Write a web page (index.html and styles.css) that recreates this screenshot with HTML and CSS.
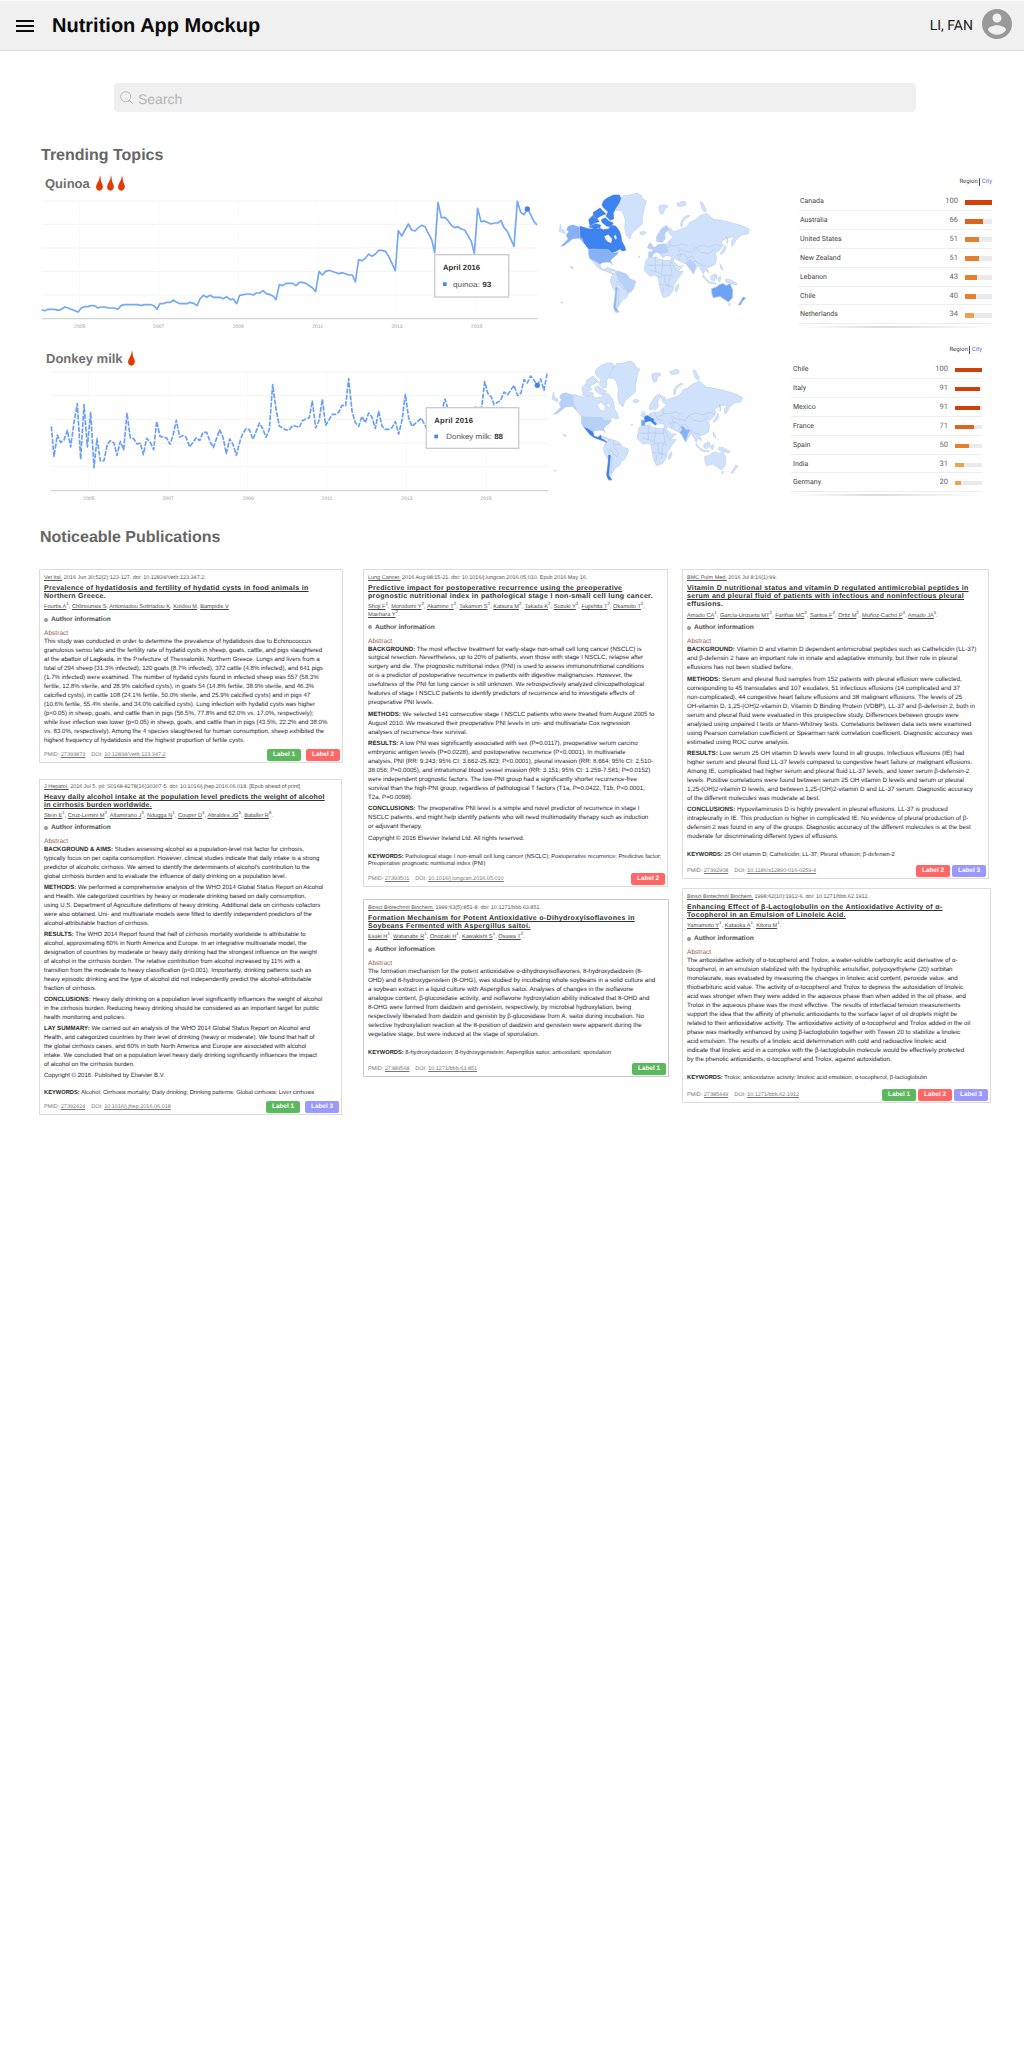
FILE: index.html
```html
<!DOCTYPE html>
<html lang="en">
<head>
<meta charset="utf-8">
<title>Nutrition App Mockup</title>
<link rel="stylesheet" href="styles.css">
</head>
<body>
<svg class="defs" width="0" height="0" aria-hidden="true">
  <symbol id="flame" viewBox="0 0 22 48"><path d="M12 0C17 9 13 17 19 26C25 36 20 48 11 48C1 48-2 38 2 29C5 22 12 15 12 0Z"/></symbol>
  <g id="land">
    <path d="M58 178l3-16 4 16 8 2 2 10-8-3-9-4zM228 110L240 90 250 76 270 74 290 68 303 74 308 86 320 92 313 110 311 125 307 140 308 160 285 180 275 190 270 206 258 195 254 172 256 150 249 128 240 120 228 120z"/>
    <path d="M300 186l10-4 9 5-8 7-10-2zM356 108l8-4 16 0 4 6-10 6-4 14-8 2-4-10zM410 98l10 0 6-6 12 4 0 8-10 4-14 0zM480 95l8 2 12 24-6 4-8-8zM447 134l-14 6-9 12-3 14 5 4 3-16 8-10 12-6z"/>
    <path d="M90 288l8 2 2 4-6 0zM205 293l14 4 14 6-4 2-20-6zM415 340l2 10-7 14-5-3 3-13zM63 396h5v2h-5zM295 258h4v3h-4z"/>
    <path d="M218 310L235 303 250 308 262 314 268 325 287 333 284 345 276 362 265 370 260 382 248 388 241 400 232 410 230 418 238 425 228 427 221 412 224 385 227 365 214 345 211 330z"/>
    <path d="M318 268L330 262 350 259 354 266 375 270 392 271 402 290 410 304 430 303 412 328 402 345 400 358 388 376 370 382 362 362 357 340 355 322 346 315 330 318 312 300z"/>
    <path d="M325 262L325 246 336 244 338 232 348 230 352 224 362 222 378 221 390 210 400 200 388 190 385 178 380 166 365 175 350 200 348 212 356 216 360 210 366 216 376 206 374 190 384 172 395 176 400 184 420 178 440 170 450 155 462 150 480 136 500 128 520 146 545 150 570 156 600 164 628 176 625 190 605 194 590 206 584 218 576 228 574 212 584 200 564 202 545 212 548 226 538 240 526 248 530 264 526 282 510 290 500 292 507 308 495 300 490 312 482 298 475 285 466 298 460 312 448 292 438 280 428 278 418 272 410 268 404 262 400 272 416 288 430 286 414 302 408 300 392 270 395 258 378 256 368 262 358 248 350 244 338 252 334 262z"/>
    <path d="M323 232l6-14 6 4 4 12-8 2zM555 224l3 12-8 12-10 4 8-14zM565 210l-6-12 2 22zM489 314l12 14 10 8-6 2-16-18zM512 318l14-8 4 10-8 12-9-4zM510 336l18 2 0 3-18-2zM534 322l8-4-2 16-5-2zM540 280l5 8 4 12-7-6zM558 326l14 2 20 12-4 4-16-4-16-6z"/>
    <path d="M515 355L530 350 540 342 550 340 558 346 570 340 578 360 577 382 565 395 552 386 540 378 520 382 516 370zM565 400l6 0-3 6zM608 380l8 4-8 8-8 12-6-1 8-12z"/>
    <path class="border" d="M240 325l16 18-4 14-12-14-12-10M227 340l10 20-2 50M242 306l0 14 18-2M322 285h24v20M346 262v22h22v-14M368 285h24v-14M355 322l15-8h18l14 6M330 300l25 6 12 8M368 285l-5 24M392 285l4 25-8 12M375 315v24l14 8M358 342l30 6-4 12M370 350v14l-6 6M389 320l-3 24 14 8M390 225l18 2 18-6 18 6M390 210l0 20-18 4M366 222l6 20 16 4M352 225l0 20M415 232l16 10 26 4 10-14 22-8 20 6 20-8 16 6M409 255l20-4 14 12 14-6M415 235l8 20-8 14M443 263l-6 14M457 257l12 18M467 232l16 14 24 4 20-16M465 272l20 12 14 4M450 280l18-8M530 312v16"/>
  </g>
  <path id="canada" fill-rule="evenodd" d="M120 168L135 172 150 176 175 172 190 178 206 176 214 164 228 168 238 182 243 196 245 212 254 228 257 240 246 242 240 236 228 243 215 248 205 238 146 236 132 218 120 203zM192 198L205 192 217 206 214 219 203 215 196 207zM226 192L232 204 226 208 221 199zM190 92L200 84 220 74 238 74 243 83 238 96 228 112 220 128 221 146 211 150 198 138 204 124 192 114 186 104zM160 126l20-13 8 8 10 10-16 6-12 8-10-4zM146 148l12-12 12 8 8 10-14 4-14 8zM146 170l20-10 16 4-4 12zM184 148l12-6 10 10 14 6-8 12-14-4-12-10z"/>
  <path id="usa" d="M119 170L98 163 84 168 80 178 86 184 78 194 84 206 66 224 62 228 72 226 98 206 119 204 130 216 128 206 120 200zM146 236L205 238 215 248 236 244 230 254 220 262 212 270 217 284 210 276 196 276 186 278 180 282 165 272 150 266 145 252z"/>
  <path id="mexico" d="M154 268L165 272 180 282 183 294 195 297 203 290 206 302 214 304 222 312 205 306 184 298 172 290z"/>
  <path id="chile" d="M227 350L232 352 229 385 227 410 236 424 226 423 221 410 225 380z"/>
  <path id="australia" d="M515 355L530 350 540 342 550 340 558 346 570 340 578 360 577 382 565 395 552 386 540 378 520 382 516 370zM609 380l8 3-9 9-7 13-5-2 8-12z"/>
</svg>

<header class="topbar">
  <svg class="menu" viewBox="0 0 18 14"><path d="M0 2h18M0 7h18M0 12h18"/></svg>
  <h1>Nutrition App Mockup</h1>
  <span class="user">LI, FAN</span>
  <svg class="avatar" viewBox="2 2 20 20"><path d="M12 2C6.48 2 2 6.48 2 12s4.48 10 10 10 10-4.480 10-10S17.520 2 12 2zm0 3c1.660 0 3 1.340 3 3s-1.340 3-3 3-3-1.340-3-3 1.340-3 3-3zm0 14.200c-2.500 0-4.710-1.280-6-3.220.030-1.990 4-3.080 6-3.080 1.990 0 5.970 1.090 6 3.080-1.290 1.940-3.500 3.220-6 3.220z"/></svg>
</header>

<main>
  <div class="search">
    <svg viewBox="0 0 14 14"><circle cx="5.700" cy="5.700" r="5"/><path d="M9.300 9.300l3.600 3.600"/></svg>
    <span>Search</span>
  </div>

  <h2>Trending Topics</h2>

  <section class="topic first">
    <div class="trend">
      <h3>Quinoa <span class="flames"><svg><use href="#flame"/></svg><svg><use href="#flame"/></svg><svg><use href="#flame"/></svg></span></h3>
      <svg class="chart" viewBox="0 75 1560 420">
        <path class="grid" d="M35 93H1523M35 163H1523M35 234H1523M35 304H1523M35 375H1523"/>
        <path class="grid faint" d="M149 93V445M387 93V445M625 93V445M863 93V445M1101 93V445M1340 93V445"/>
        <path class="axis" d="M35 446H1523"/>
        <polyline class="line" points="35,419 44,422 54,418 74,418 84,421 94,418 104,411 114,414 144,426 154,414 163,410 173,410 183,407 193,407 203,414 213,411 225,411 233,414 253,414 263,418 273,407 283,404 323,404 333,407 343,404 363,404 372,407 381,418 390,401 400,401 410,397 421,397 430,390 440,397 450,401 471,401 480,397 491,400 501,407 510,387 520,376 530,382 540,376 550,382 570,382 580,386 590,380 600,389 610,387 620,401 629,376 650,372 660,372 670,375 679,369 689,369 699,362 709,371 720,374 730,379 738,389 748,344 758,347 768,340 788,340 798,347 808,337 818,337 828,340 848,354 857,365 867,304 877,315 887,304 897,301 927,311 937,308 957,315 967,315 976,336 986,269 996,272 1006,265 1016,252 1026,259 1036,252 1046,241 1056,241 1066,244 1076,259 1096,302 1105,182 1115,198 1135,162 1145,180 1155,183 1165,173 1175,166 1185,170 1195,190 1205,209 1214,248 1224,97 1234,143 1244,142 1254,152 1264,166 1274,173 1284,170 1294,177 1304,180 1324,214 1333,251 1343,115 1353,155 1363,153 1383,162 1393,159 1403,159 1413,152 1422,173 1432,184 1452,229 1462,94 1472,127 1482,134 1492,116 1502,134 1511,153 1521,165"/>
        <circle class="dot" cx="1492" cy="117" r="8"/>
        <g class="years"><text x="149" y="473">2005</text><text x="386" y="473">2007</text><text x="625" y="473">2009</text><text x="863" y="473">2011</text><text x="1101" y="473">2013</text><text x="1340" y="473">2015</text></g>
        <rect class="tip" x="1214" y="254" width="222" height="127"/>
        <text class="tip-title" x="1239" y="300" textLength="111">April 2016</text>
        <rect class="key" x="1239" y="337" width="11" height="11"/>
        <text class="tip-text" x="1269" y="351" textLength="115" lengthAdjust="spacingAndGlyphs">quinoa: <tspan>93</tspan></text>
      </svg>
    </div>
    <svg class="map" viewBox="30 50 630 400">
      <use href="#land"/><use class="s3" href="#chile"/><use href="#mexico"/><use class="s5" href="#canada"/><use class="s3" href="#usa"/><use class="s4" href="#australia"/>
      <path class="s2" d="M338 232l10-2 4-6 10-2 16 0 6 22-20 6-14-4-10 4-4 10-8 0 0-14 12-2z"/>
      <path class="s2" d="M350 200L365 175 380 166 385 178 372 192 374 206 366 216 356 214zM323 232l6-14 6 4 4 12-8 2zM438 280l12-14 8 10 10 8-8 24z"/>
      <path class="s2" d="M235 303l27 10 6 12 19 8-8 24-16 10-12-20-14-14-8-22z"/>
    </svg>
    <div class="regions">
      <div class="tabs"><span>Region</span><i></i><b>City</b></div>
      <div class="row"><span>Canada</span><em>100</em><u><i class="r1" style="width:100%"></i></u></div>
      <div class="row"><span>Australia</span><em>66</em><u><i class="r2" style="width:67%"></i></u></div>
      <div class="row"><span>United States</span><em>51</em><u><i class="r3" style="width:52%"></i></u></div>
      <div class="row"><span>New Zealand</span><em>51</em><u><i class="r3" style="width:52%"></i></u></div>
      <div class="row"><span>Lebanon</span><em>43</em><u><i class="r3" style="width:43%"></i></u></div>
      <div class="row"><span>Chile</span><em>40</em><u><i class="r3" style="width:40%"></i></u></div>
      <div class="row"><span>Netherlands</span><em>34</em><u><i class="r4" style="width:34%"></i></u></div>
      <div class="fade"></div>
    </div>
  </section>

  <section class="topic second">
    <div class="trend">
      <h3>Donkey milk <span class="flames"><svg><use href="#flame"/></svg></span></h3>
      <svg class="chart" viewBox="0 80 1560 420">
        <path class="grid" d="M62 95H1554M62 166H1554M62 237H1554M62 308H1554M62 379H1554"/>
        <path class="grid faint" d="M176 95V450M414 95V450M653 95V450M891 95V450M1130 95V450M1370 95V450"/>
        <path class="axis" d="M62 451H1554"/>
        <polyline class="line dashed" points="64,258 72,348 82,284 92,306 102,299 112,270 122,320 132,246 142,190 152,355 162,193 172,320 182,216 192,382 201,295 211,362 222,361 232,312 241,301 252,308 261,345 271,303 281,328 291,219 301,293 311,295 321,311 331,309 340,343 350,294 361,306 371,328 380,243 390,288 410,293 420,312 429,285 439,240 449,290 458,286 468,290 479,320 499,292 509,301 519,276 530,276 540,303 550,322 569,268 579,291 589,340 599,296 609,312 619,345 629,306 638,280 648,265 658,268 669,297 688,248 698,265 708,291 718,267 728,133 738,205 748,257 768,269 778,269 788,255 808,261 817,241 838,232 847,182 857,263 867,241 877,177 887,255 907,222 917,222 926,216 936,195 947,196 956,115 966,212 976,247 986,258 996,228 1006,247 1016,218 1026,231 1036,264 1046,213 1056,257 1066,267 1076,267 1086,262 1096,244 1106,281 1116,240 1126,162 1136,233 1146,258 1174,234 1190,264 1235,215 1245,176 1255,210 1325,210 1335,201 1355,202 1364,124 1374,160 1384,170 1392,193 1412,180 1422,155 1433,163 1452,135 1463,166 1473,158 1482,118 1492,128 1502,107 1512,120 1522,134 1532,116 1542,150 1552,95"/>
        <circle class="dot" cx="1522" cy="135" r="8"/>
        <g class="years"><text x="176" y="479">2005</text><text x="414" y="479">2007</text><text x="655" y="479">2009</text><text x="891" y="479">2011</text><text x="1130" y="479">2013</text><text x="1368" y="479">2015</text></g>
        <rect class="tip" x="1189" y="202" width="277" height="122"/>
        <text class="tip-title" x="1213" y="247" textLength="116">April 2016</text>
        <rect class="key" x="1213" y="283" width="11" height="11"/>
        <text class="tip-text" x="1249" y="297" textLength="170" lengthAdjust="spacingAndGlyphs">Donkey milk: <tspan>88</tspan></text>
      </svg>
    </div>
    <svg class="map" viewBox="30 50 630 400">
      <use href="#land"/><use href="#canada"/><use class="s2" href="#usa"/><use class="s5" href="#mexico"/><use class="s5" href="#chile"/>
      <path class="s4" d="M325 262L325 246 336 246 334 238 342 232 352 238 348 246 338 250 334 262z"/>
      <path class="s5" d="M334 236l10-4 8 6 10 4 0 6 8 8-4 4-14-12-14 2z"/>
      <path class="s3" d="M443 264l10 2 6 8 14 2-8 10-8 24-10-20-8-8 8-6z"/>
    </svg>
    <div class="regions">
      <div class="tabs"><span>Region</span><i></i><b>City</b></div>
      <div class="row"><span>Chile</span><em>100</em><u><i class="r1" style="width:100%"></i></u></div>
      <div class="row"><span>Italy</span><em>91</em><u><i class="r1" style="width:92%"></i></u></div>
      <div class="row"><span>Mexico</span><em>91</em><u><i class="r1" style="width:92%"></i></u></div>
      <div class="row"><span>France</span><em>71</em><u><i class="r2" style="width:71%"></i></u></div>
      <div class="row"><span>Spain</span><em>50</em><u><i class="r3" style="width:51%"></i></u></div>
      <div class="row"><span>India</span><em>31</em><u><i class="r4" style="width:32%"></i></u></div>
      <div class="row"><span>Germany</span><em>20</em><u><i class="r4" style="width:21%"></i></u></div>
      <div class="fade"></div>
    </div>
  </section>

  <h2 class="pubs-title">Noticeable Publications</h2>

  <section class="pubs">
    <div class="col">
      <article class="card c1">
        <div class="cite"><a>Vet Ital.</a> 2016 Jun 30;52(2):123-127. doi: 10.12834/VetIt.123.347.2.</div>
        <h4><a>Prevalence of hydatidosis and fertility of hydatid cysts in food animals in</a><br>Northern Greece.</h4>
        <div class="authors"><a>Fourtis A</a><sup>1</sup>, <a>Chlinounsis S</a>, <a>Antoniadou Sotiriadou K</a>, <a>Koidou M</a>, <a>Bampidis V</a></div>
        <div class="info"><i></i>Author information</div>
        <h5>Abstract</h5>
        <p>This study was conducted in order to determine the prevalence of hydatidosis due to Echinococcus<br>granulosus sensu lato and the fertility rate of hydatid cysts in sheep, goats, cattle, and pigs slaughtered<br>at the abattoir of Lagkada, in the Prefecture of Thessaloniki, Northern Greece. Lungs and livers from a<br>total of 294 sheep (31.3% infected), 120 goats (8.7% infected), 372 cattle (4.8% infected), and 641 pigs<br>(1.7% infected) were examined. The number of hydatid cysts found in infected sheep was 557 (58.3%<br>fertile, 12.8% sterile, and 28.9% calcified cysts), in goats 54 (14.8% fertile, 38.9% sterile, and 46.3%<br>calcified cysts), in cattle 108 (24.1% fertile, 50.0% sterile, and 25.9% calcified cysts) and in pigs 47<br>(10.6% fertile, 55.4% sterile, and 34.0% calcified cysts). Lung infection with hydatid cysts was higher<br>(p&lt;0.05) in sheep, goats, and cattle than in pigs (56.5%, 77.8% and 62.0% vs. 17.0%, respectively);<br>while liver infection was lower (p&lt;0.05) in sheep, goats, and cattle than in pigs (43.5%, 22.2% and 38.0%<br>vs. 83.0%, respectively). Among the 4 species slaughtered for human consumption, sheep exhibited the<br>highest frequency of hydatidosis and the highest proportion of fertile cysts.</p>
        <footer><span>PMID: <a>27393873</a></span><span>DOI: <a>10.12834/VetIt.123.347.2</a></span><b class="l1">Label 1</b><b class="l2">Label 2</b></footer>
      </article>
      <article class="card c2">
        <div class="cite"><a>J Hepatol.</a> 2016 Jul 5. pii: S0168-8278(16)30307-5. doi: 10.1016/j.jhep.2016.06.018. [Epub ahead of print]</div>
        <h4><a>Heavy daily alcohol intake at the population level predicts the weight of alcohol</a><br><a>in cirrhosis burden worldwide.</a></h4>
        <div class="authors"><a>Stein E</a><sup>1</sup>, <a>Cruz-Lemini M</a><sup>2</sup>, <a>Altamirano J</a><sup>3</sup>, <a>Ndugga N</a><sup>1</sup>, <a>Couper D</a><sup>4</sup>, <a>Abraldes JG</a><sup>5</sup>, <a>Bataller R</a><sup>6</sup>.</div>
        <div class="info"><i></i>Author information</div>
        <h5>Abstract</h5>
        <p><strong>BACKGROUND &amp; AIMS:</strong> Studies assessing alcohol as a population-level risk factor for cirrhosis,<br>typically focus on per capita consumption. However, clinical studies indicate that daily intake is a strong<br>predictor of alcoholic cirrhosis. We aimed to identify the determinants of alcohol's contribution to the<br>global cirrhosis burden and to evaluate the influence of daily drinking on a population level.</p>
        <p><strong>METHODS:</strong> We performed a comprehensive analysis of the WHO 2014 Global Status Report on Alcohol<br>and Health. We categorized countries by heavy or moderate drinking based on daily consumption,<br>using U.S. Department of Agriculture definitions of heavy drinking. Additional data on cirrhosis cofactors<br>were also obtained. Uni- and multivariate models were fitted to identify independent predictors of the<br>alcohol-attributable fraction of cirrhosis.</p>
        <p><strong>RESULTS:</strong> The WHO 2014 Report found that half of cirrhosis mortality worldwide is attributable to<br>alcohol, approximating 60% in North America and Europe. In an integrative multivariate model, the<br>designation of countries by moderate or heavy daily drinking had the strongest influence on the weight<br>of alcohol in the cirrhosis burden. The relative contribution from alcohol increased by 11% with a<br>transition from the moderate to heavy classification (p&lt;0.001). Importantly, drinking patterns such as<br>heavy episodic drinking and the type of alcohol did not independently predict the alcohol-attributable<br>fraction of cirrhosis.</p>
        <p><strong>CONCLUSIONS:</strong> Heavy daily drinking on a population level significantly influences the weight of alcohol<br>in the cirrhosis burden. Reducing heavy drinking should be considered as an important target for public<br>health monitoring and policies.</p>
        <p><strong>LAY SUMMARY:</strong> We carried out an analysis of the WHO 2014 Global Status Report on Alcohol and<br>Health, and categorized countries by their level of drinking (heavy or moderate). We found that half of<br>the global cirrhosis cases, and 60% in both North America and Europe are associated with alcohol<br>intake. We concluded that on a population level heavy daily drinking significantly influences the impact<br>of alcohol on the cirrhosis burden.</p>
        <p>Copyright © 2016. Published by Elsevier B.V.</p>
        <p class="kw"><strong>KEYWORDS:</strong> Alcohol; Cirrhosis mortality; Daily drinking; Drinking patterns; Global cirrhosis; Liver cirrhosis</p>
        <footer><span>PMID: <a>27392424</a></span><span>DOI: <a>10.1016/j.jhep.2016.06.018</a></span><b class="l1">Label 1</b><b class="l3">Label 3</b></footer>
      </article>
    </div>

    <div class="col">
      <article class="card c3">
        <div class="cite"><a>Lung Cancer.</a> 2016 Aug;98:15-21. doi: 10.1016/j.lungcan.2016.05.010. Epub 2016 May 16.</div>
        <h4><a>Predictive impact for postoperative recurrence using the preoperative</a><br>prognostic nutritional index in pathological stage I non-small cell lung cancer.</h4>
        <div class="authors"><a>Shoji F</a><sup>1</sup>, <a>Morodomi Y</a><sup>2</sup>, <a>Akamine T</a><sup>2</sup>, <a>Takamori S</a><sup>2</sup>, <a>Katsura M</a><sup>2</sup>, <a>Takada K</a><sup>2</sup>, <a>Suzuki Y</a><sup>2</sup>, <a>Fujishita T</a><sup>2</sup>, <a>Okamoto T</a><sup>2</sup>,<br><a>Maehara Y</a><sup>2</sup>.</div>
        <div class="info"><i></i>Author information</div>
        <h5>Abstract</h5>
        <p><strong>BACKGROUND:</strong> The most effective treatment for early-stage non-small cell lung cancer (NSCLC) is<br>surgical resection. Nevertheless, up to 20% of patients, even those with stage I NSCLC, relapse after<br>surgery and die. The prognostic nutritional index (PNI) is used to assess immunonutritional conditions<br>or is a predictor of postoperative recurrence in patients with digestive malignancies. However, the<br>usefulness of the PNI for lung cancer is still unknown. We retrospectively analyzed clinicopathological<br>features of stage I NSCLC patients to identify predictors of recurrence and to investigate effects of<br>preoperative PNI levels.</p>
        <p><strong>METHODS:</strong> We selected 141 consecutive stage I NSCLC patients who were treated from August 2005 to<br>August 2010. We measured their preoperative PNI levels in uni- and multivariate Cox regression<br>analyses of recurrence-free survival.</p>
        <p><strong>RESULTS:</strong> A low PNI was significantly associated with sex (P=0.0117), preoperative serum carcino<br>embryonic antigen levels (P=0.0228), and postoperative recurrence (P&lt;0.0001). In multivariate<br>analysis, PNI (RR: 9.243; 95% CI: 3.662-25.823; P&lt;0.0001), pleural invasion (RR: 8.664; 95% CI: 2.510-<br>38.056; P=0.0005), and intratumoral blood vessel invasion (RR: 3.151; 95% CI: 1.259-7.581; P=0.0152)<br>were independent prognostic factors. The low-PNI group had a significantly shorter recurrence-free<br>survival than the high-PNI group, regardless of pathological T factors (T1a, P=0.0422, T1b, P&lt;0.0001,<br>T2a, P=0.0098).</p>
        <p><strong>CONCLUSIONS:</strong> The preoperative PNI level is a simple and novel predictor of recurrence in stage I<br>NSCLC patients, and might help identify patients who will need multimodality therapy such as induction<br>or adjuvant therapy.</p>
        <p>Copyright © 2016 Elsevier Ireland Ltd. All rights reserved.</p>
        <p class="kw"><strong>KEYWORDS:</strong> Pathological stage I non-small cell lung cancer (NSCLC); Postoperative recurrence; Predictive factor;<br>Preoperative prognostic nutritional index (PNI)</p>
        <footer><span>PMID: <a>27393501</a></span><span>DOI: <a>10.1016/j.lungcan.2016.05.010</a></span><b class="l2">Label 2</b></footer>
      </article>
      <article class="card c4">
        <div class="cite"><a>Biosci Biotechnol Biochem.</a> 1999;63(5):851-8. doi: 10.1271/bbb.63.851.</div>
        <h4><a>Formation Mechanism for Potent Antioxidative o-Dihydroxyisoflavones in</a><br><a>Soybeans Fermented with Aspergillus saitoi.</a></h4>
        <div class="authors"><a>Esaki H</a><sup>1</sup>, <a>Watanabe R</a><sup>1</sup>, <a>Onozaki H</a><sup>1</sup>, <a>Kawakishi S</a><sup>1</sup>, <a>Osawa T</a><sup>2</sup>.</div>
        <div class="info"><i></i>Author information</div>
        <h5>Abstract</h5>
        <p>The formation mechanism for the potent antioxidative o-dihydroxyisoflavones, 8-hydroxydaidzein (8-<br>OHD) and 8-hydroxygenistein (8-OHG), was studied by incubating whole soybeans in a solid culture and<br>a soybean extract in a liquid culture with Aspergillus saitoi. Analyses of changes in the isoflavone<br>analogue content, β-glucosidase activity, and isoflavone hydroxylation ability indicated that 8-OHD and<br>8-OHG were formed from daidzein and genistein, respectively, by microbial hydroxylation, being<br>respectively liberated from daidzin and genistin by β-glucosidase from A. saitoi during incubation. No<br>selective hydroxylation reaction at the 8-position of daidzein and genistein were apparent during the<br>vegetative stage, but were induced at the stage of sporulation.</p>
        <p class="kw"><strong>KEYWORDS:</strong> 8-hydroxydaidzein; 8-hydroxygenistein; Aspergillus saitoi; antioxidant; sporulation</p>
        <footer><span>PMID: <a>27389568</a></span><span>DOI: <a>10.1271/bbb.63.851</a></span><b class="l1">Label 1</b></footer>
      </article>
    </div>

    <div class="col">
      <article class="card c5">
        <div class="cite"><a>BMC Pulm Med.</a> 2016 Jul 8;16(1):99.</div>
        <h4><a>Vitamin D nutritional status and vitamin D regulated antimicrobial peptides in</a><br><a>serum and pleural fluid of patients with infectious and noninfectious pleural</a><br>effusions.</h4>
        <div class="authors"><a>Amado CA</a><sup>1</sup>, <a>García-Unzueta MT</a><sup>2</sup>, <a>Fariñas MC</a><sup>3</sup>, <a>Santos F</a><sup>2</sup>, <a>Ortiz M</a><sup>2</sup>, <a>Muñoz-Cacho P</a><sup>4</sup>, <a>Amado JA</a><sup>5</sup>.</div>
        <div class="info"><i></i>Author information</div>
        <h5>Abstract</h5>
        <p><strong>BACKGROUND:</strong> Vitamin D and vitamin D dependent antimicrobial peptides such as Cathelicidin (LL-37)<br>and β-defensin 2 have an important role in innate and adaptative immunity, but their role in pleural<br>effusions has not been studied before.</p>
        <p><strong>METHODS:</strong> Serum and pleural fluid samples from 152 patients with pleural effusion were collected,<br>corresponding to 45 transudates and 107 exudates, 51 infectious effusions (14 complicated and 37<br>non-complicated), 44 congestive heart failure effusions and 38 malignant effusions. The levels of 25<br>OH-vitamin D, 1,25-(OH)2-vitamin D, Vitamin D Binding Protein (VDBP), LL-37 and β-defensin 2, both in<br>serum and pleural fluid were evaluated in this prospective study. Differences between groups were<br>analysed using unpaired t tests or Mann-Whitney tests. Correlations between data sets were examined<br>using Pearson correlation coefficient or Spearman rank correlation coefficient. Diagnostic accuracy was<br>estimated using ROC curve analysis.</p>
        <p><strong>RESULTS:</strong> Low serum 25 OH vitamin D levels were found in all groups. Infectious effusions (IE) had<br>higher serum and pleural fluid LL-37 levels compared to congestive heart failure or malignant effusions.<br>Among IE, complicated had higher serum and pleural fluid LL-37 levels, and lower serum β-defensin-2<br>levels. Positive correlations were found between serum 25 OH vitamin D levels and serum or pleural<br>1,25-(OH)2-vitamin D levels, and between 1,25-(OH)2-vitamin D and LL-37 serum. Diagnostic accuracy<br>of the different molecules was moderate at best.</p>
        <p><strong>CONCLUSIONS:</strong> Hypovitaminosis D is highly prevalent in pleural effusions. LL-37 is produced<br>intrapleurally in IE. This production is higher in complicated IE. No evidence of pleural production of β-<br>defensin 2 was found in any of the groups. Diagnostic accuracy of the different molecules is at the best<br>moderate for discriminating different types of effusions.</p>
        <p class="kw"><strong>KEYWORDS:</strong> 25 OH vitamin D; Cathelicidin; LL-37; Pleural effusion; β-defensin-2</p>
        <footer><span>PMID: <a>27392908</a></span><span>DOI: <a>10.1186/s12890-016-0259-4</a></span><b class="l2">Label 2</b><b class="l3">Label 3</b></footer>
      </article>
      <article class="card c6">
        <div class="cite"><a>Biosci Biotechnol Biochem.</a> 1998;62(10):1912-6. doi: 10.1271/bbb.62.1912.</div>
        <h4><a>Enhancing Effect of β-Lactoglobulin on the Antioxidative Activity of α-</a><br><a>Tocopherol in an Emulsion of Linoleic Acid.</a></h4>
        <div class="authors"><a>Yamamoto Y</a><sup>1</sup>, <a>Kataoka A</a><sup>1</sup>, <a>Kitora M</a><sup>1</sup>.</div>
        <div class="info"><i></i>Author information</div>
        <h5>Abstract</h5>
        <p>The antioxidative activity of α-tocopherol and Trolox, a water-soluble carboxylic acid derivative of α-<br>tocopherol, in an emulsion stabilized with the hydrophilic emulsifier, polyoxyethylene (20) sorbitan<br>monolaurate, was evaluated by measuring the changes in linoleic acid content, peroxide value, and<br>thiobarbituric acid value. The activity of α-tocopherol and Trolox to depress the autoxidation of linoleic<br>acid was stronger when they were added in the aqueous phase than when added in the oil phase, and<br>Trolox in the aqueous phase was the most effective. The results of interfacial tension measurements<br>support the idea that the affinity of phenolic antioxidants to the surface layer of oil droplets might be<br>related to their antioxidative activity. The antioxidative activity of α-tocopherol and Trolox added in the oil<br>phase was markedly enhanced by using β-lactoglobulin together with Tween 20 to stabilize a linoleic<br>acid emulsion. The results of a linoleic acid determination with cold and radioactive linoleic acid<br>indicate that linoleic acid in a complex with the β-lactoglobulin molecule would be effectively protected<br>by the phenolic antioxidants, α-tocopherol and Trolox, against autoxidation.</p>
        <p class="kw"><strong>KEYWORDS:</strong> Trolox; antioxidative activity; linoleic acid emulsion; α-tocopherol; β-lactoglobulin</p>
        <footer><span>PMID: <a>27385449</a></span><span>DOI: <a>10.1271/bbb.62.1912</a></span><b class="l1">Label 1</b><b class="l2">Label 2</b><b class="l3">Label 3</b></footer>
      </article>
    </div>
  </section>
</main>
</body>
</html>
```
FILE: styles.css
```css
* { box-sizing: border-box; }
body { margin: 0; background: #fff; font-family: "Liberation Sans", Arial, sans-serif; color: #222; min-height: 2048px; text-rendering: geometricPrecision; }
h1, h2, h3, h4, h5, p { margin: 0; }
.defs { position: absolute; }

.topbar { display: flex; align-items: center; height: 51px; padding: 0 12px 0 16px; background: #f0f0f0; border-top: 1px solid #f8f8f8; border-bottom: 1px solid #d9d9d9; }
.menu { width: 18px; height: 14px; }
.menu path { stroke: #0c0c0c; stroke-width: 2; fill: none; }
.topbar h1 { margin-left: 18px; font-size: 20px; line-height: 24px; color: #0a0a0a; }
.user { margin-left: auto; font: 14px/20px Roboto, sans-serif; color: #222; }
.avatar { width: 30px; height: 30px; margin: -3px 0 0 9px; fill: #999; }

.search { display: flex; align-items: center; width: 802px; height: 29px; margin: 32px 0 0 114px; padding-left: 6px; background: #f0f0f0; border-radius: 4px; color: #b5b5b5; font-size: 14px; }
.search svg { width: 14px; height: 14px; margin-right: 4px; fill: none; stroke: #b9b9b9; stroke-width: 1; }
.search span { padding-top: 2px; }

h2 { margin: 34px 0 0 41px; font-size: 16px; line-height: 20px; color: #666; }

.topic { display: grid; grid-template-columns: 520px 249px 1fr; margin-left: 30px; height: 170px; }
.topic.first { margin-top: 4px; }
.trend h3 { display: flex; gap: 6px; height: 25px; padding: 5px 0 0 15px; font-size: 13px; line-height: 17px; color: #707070; }
.second .trend h3 { gap: 5px; padding: 10px 0 0 16px; height: 26.600px; }
.flames { display: flex; gap: 4px; }
.flames svg { width: 7px; height: 16px; fill: #e03c00; }
.chart { display: block; width: 520px; height: 140px; }
.grid { stroke: #f3f3f3; stroke-width: 3; fill: none; }
.faint { stroke: #fafafa; }
.axis { stroke: #d4d4d4; stroke-width: 4; }
.line { fill: none; stroke: #74a7f8; stroke-width: 5; stroke-linejoin: round; }
.dashed { stroke-dasharray: 15 4; stroke: #6a9ff5; }
.dot { fill: #4583ea; }
.years { font-size: 15px; fill: #999; text-anchor: middle; }
.tip { fill: #fff; stroke: #ccc; stroke-width: 4; }
.tip-title { font-size: 23px; font-weight: bold; fill: #333; }
.tip-text { font-size: 23px; fill: #555; }
.tip-text tspan { font-weight: bold; fill: #333; }
.key { fill: #4285f4; }

.map { display: block; width: 210px; height: 133.330px; margin-top: 16.670px; fill: #d0e1fb; stroke: #b6c8e4; stroke-width: 1.500; stroke-linejoin: round; }
.second .map { margin: 14.700px 0 0 -7.300px; }
.border { fill: none; stroke-width: 2; }
.s2 { fill: #b7d0f8; }
.s3 { fill: #86b1f6; }
.s4 { fill: #6ea2f5; }
.s5 { fill: #3d83ef; stroke: #3878dc; }

.regions { width: 193px; padding-top: 8px; font: 7px/8px Roboto, sans-serif; color: #444; }
.second .regions { width: 191px; margin-left: -8px; padding-top: 6px; }
.tabs { display: flex; justify-content: flex-end; align-items: center; height: 8px; margin-bottom: 6.300px; font-size: 6px; }
.tabs i { width: 1px; height: 8px; margin: 0 1.500px; background: #555; }
.tabs b { font-weight: 400; color: #5b6fd0; }
.row { display: grid; grid-template-columns: 1fr 30px 27px; column-gap: 7px; align-items: center; height: 18.870px; padding-left: 1px; border-bottom: 1px solid #eeeef1; }
.second .row { padding-left: 2px; }
.row em { font-style: normal; text-align: right; font-size: 7.500px; color: #666; }
.row u { display: block; height: 5px; margin-top: 2px; background: #eaeaea; }
.second .row u { height: 4px; }
.row u i { display: block; height: 100%; }
.r1 { background: #cf410b; }
.r2 { background: #dc6420; }
.r3 { background: #e68031; }
.r4 { background: #f0a04c; }
.fade { height: 2px; margin-top: 2px; background: linear-gradient(90deg, #fff, #dcdcdc 45%, #fff); }

.pubs-title { margin: 17.500px 0 0 40px; }

.pubs { display: flex; padding: 21.500px 0 0 39px; }
.col { display: flex; flex-direction: column; }
.col:nth-child(1) { width: 324px; gap: 16px; }
.col:nth-child(2) { width: 319px; gap: 12px; }
.col:nth-child(3) { width: 309px; gap: 9px; }
.card { display: flex; flex-direction: column; padding: 4px 2px 1px 4px; border: 1px solid #dcdcdc; font-size: 6.120px; color: #2b2338; white-space: nowrap; }
.card a { text-decoration: underline; text-decoration-thickness: .5px; }
.c1 { width: 304px; height: 194px; }
.c2 { width: 303px; height: 336px; padding-top: 3px; font-size: 6.060px; }
.c3 { width: 305px; height: 318px; font-size: 6.160px; }
.c4 { width: 306px; height: 178px; border-color: #c9c9c9; font-size: 6.230px; }
.c5 { width: 307px; height: 310px; font-size: 6.250px; }
.c6 { width: 309px; height: 215px; font-size: 6.180px; }
.cite { font-size: 5.480px; line-height: 8px; color: #555; }
.card h4 { margin-top: 3px; font-size: 7px; line-height: 8.200px; letter-spacing: .32px; color: #333; }
.c2 h4 { letter-spacing: .21px; }
.c1 h4 { letter-spacing: .29px; }
.authors { margin-top: 3px; font-size: 5.650px; line-height: 7.300px; color: #4a4a4a; }
.authors sup { font-size: 4.500px; line-height: 0; }
.info { display: flex; align-items: center; gap: 3px; margin-top: 3.500px; font-size: 6.600px; line-height: 9px; font-weight: bold; color: #505050; }
.info i { width: 4px; height: 4px; border-radius: 2px; background: #999; }
.c2 .info { margin-top: 2.500px; }
.card h5 { margin-top: 5px; font-size: 6.600px; line-height: 9px; font-weight: 400; color: #985f4c; }
.card p { line-height: 8.980px; margin-bottom: 2.400px; }
.c1 p, .c2 p { line-height: 8.930px; margin-bottom: 2.200px; }
.card strong { color: #2a2a2a; }
.card p.kw { margin-top: 7.400px; font-size: 5.740px; line-height: 7.600px; }
.card footer { display: flex; align-items: center; gap: 5px; height: 12px; margin-top: auto; font-size: 5.500px; color: #777; }
.card footer span { margin-right: 1px; }
.card footer b { width: 34px; height: 12px; border-radius: 2px; font-size: 6.400px; line-height: 12.500px; text-align: center; color: #fff; }
.card footer b:first-of-type { margin-left: auto; }
.c5 footer, .c6 footer { gap: 2px; }
.c5 footer span:first-child, .c6 footer span:first-child { margin-right: 4px; }
.l1 { background: #5cb85c; }
.l2 { background: #ff6666; }
.l3 { background: #9999ff; }
```
